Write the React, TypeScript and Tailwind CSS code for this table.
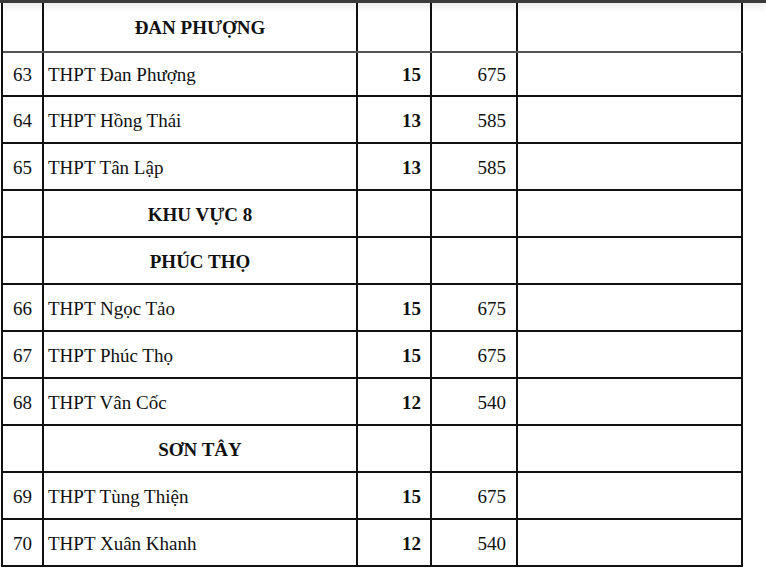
import React from "react";

type Row =
  | { kind: "head"; title: string; h: string }
  | { kind: "data"; no: string; name: string; a: string; b: string; h: string };

const rows: Row[] = [
  { kind: "head", title: "ĐAN PHƯỢNG", h: "h-[50px]" },
  { kind: "data", no: "63", name: "THPT Đan Phượng", a: "15", b: "675", h: "h-[44px]" },
  { kind: "data", no: "64", name: "THPT Hồng Thái", a: "13", b: "585", h: "h-[47px]" },
  { kind: "data", no: "65", name: "THPT Tân Lập", a: "13", b: "585", h: "h-[47px]" },
  { kind: "head", title: "KHU VỰC 8", h: "h-[47px]" },
  { kind: "head", title: "PHÚC THỌ", h: "h-[47px]" },
  { kind: "data", no: "66", name: "THPT Ngọc Tảo", a: "15", b: "675", h: "h-[47px]" },
  { kind: "data", no: "67", name: "THPT Phúc Thọ", a: "15", b: "675", h: "h-[47px]" },
  { kind: "data", no: "68", name: "THPT Vân Cốc", a: "12", b: "540", h: "h-[47px]" },
  { kind: "head", title: "SƠN TÂY", h: "h-[47px]" },
  { kind: "data", no: "69", name: "THPT Tùng Thiện", a: "15", b: "675", h: "h-[47px]" },
  { kind: "data", no: "70", name: "THPT Xuân Khanh", a: "12", b: "540", h: "h-[47px]" },
];

export default function App() {
  return (
    <div
      className="relative w-[766px] h-[579px] overflow-hidden bg-white text-[#111]"
      style={{ fontFamily: '"Liberation Serif", "Times New Roman", serif' }}
    >
      <div className="relative z-10 h-[3px] w-full bg-[#3a3a3a] shadow-[0_2px_8px_rgba(0,0,0,0.22)]" />
      <div className="ml-[1px] w-[742px] border-l-2 border-[#111]">
        {rows.map((r, i) => (
          <div
            key={i}
            className={`flex ${r.h} border-b-2 ${i === 0 ? "border-[#555]" : "border-[#111]"}`}
          >
            <div className="w-[41px] shrink-0 border-r-2 border-[#111] flex items-center justify-center pt-[3px] text-[19px]">
              {r.kind === "data" ? r.no : ""}
            </div>
            <div
              className={`w-[314px] shrink-0 border-r-2 border-[#111] flex items-center pt-[3px] text-[19px] ${
                r.kind === "head" ? "justify-center font-bold" : "pl-[4px]"
              }`}
            >
              {r.kind === "data" ? r.name : r.title}
            </div>
            <div className="w-[74px] shrink-0 border-r-2 border-[#111] flex items-center justify-end pt-[3px] pr-[9px] text-[19px] font-bold">
              {r.kind === "data" ? r.a : ""}
            </div>
            <div className="w-[86px] shrink-0 border-r-2 border-[#111] flex items-center justify-end pt-[3px] pr-[10px] text-[19px]">
              {r.kind === "data" ? r.b : ""}
            </div>
            <div className="w-[225px] shrink-0 border-r-2 border-[#111]" />
          </div>
        ))}
      </div>
    </div>
  );
}
